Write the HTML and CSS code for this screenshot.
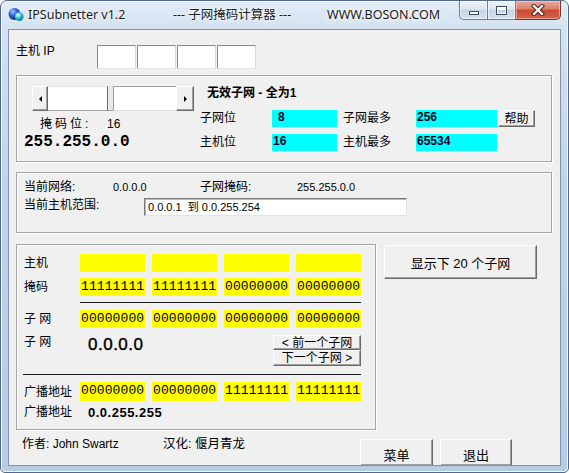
FILE: index.html
```html
<!DOCTYPE html>
<html lang="zh-CN">
<head>
<meta charset="utf-8">
<title>IPSubnetter v1.2</title>
<link rel="stylesheet" href="styles.css">
</head>
<body>
<div class="window">
  <div class="titlebar">
    <svg class="app-icon" viewBox="0 0 16 16">
      <defs>
        <radialGradient id="gBlue" cx="35%" cy="30%" r="75%">
          <stop offset="0" stop-color="#a8ccff"/>
          <stop offset="0.45" stop-color="#2f62cc"/>
          <stop offset="1" stop-color="#12297a"/>
        </radialGradient>
        <radialGradient id="gCyan" cx="35%" cy="30%" r="75%">
          <stop offset="0" stop-color="#e4fdff"/>
          <stop offset="0.5" stop-color="#38c4d6"/>
          <stop offset="1" stop-color="#0f6f80"/>
        </radialGradient>
      </defs>
      <circle cx="6.5" cy="7" r="6" fill="url(#gBlue)"/>
      <circle cx="11.2" cy="9.6" r="4.3" fill="url(#gCyan)"/>
    </svg>
    <span class="title t1">IPSubnetter v1.2</span>
    <span class="title t2">--- 子网掩码计算器 ---</span>
    <span class="title t3">WWW.BOSON.COM</span>
    <div class="controls">
      <div class="cbtn cmin"><i class="g-min"></i></div>
      <div class="cbtn cmax"><i class="g-max"></i></div>
      <div class="cbtn cclose">
        <svg class="g-close" viewBox="0 0 14 12">
          <path d="M3 2 L11 10 M11 2 L3 10" stroke="#4a2520" stroke-width="4.2" stroke-linecap="square"/>
          <path d="M3 2 L11 10 M11 2 L3 10" stroke="#ffffff" stroke-width="2.2" stroke-linecap="square"/>
        </svg>
      </div>
    </div>
  </div>

  <div class="client">
    <div class="ip-row">
      <span class="ip-label">主机 IP</span>
      <div class="ip-boxes">
        <span class="ip-box"></span><span class="ip-box"></span><span class="ip-box"></span><span class="ip-box"></span>
      </div>
    </div>

    <div class="panel panel-mask">
      <div class="mask-left">
        <div class="scroll">
          <span class="sb-btn"><i class="tri-left"></i></span>
          <span class="sb-a"></span>
          <span class="sb-thumb"></span>
          <span class="sb-b"></span>
          <span class="sb-btn sb-right"><i class="tri-right"></i></span>
        </div>
        <div class="bits-row"><span class="bits-label">掩码位:</span><span>16</span></div>
        <div class="big-mask">255.255.0.0</div>
      </div>
      <div class="mask-right">
        <div class="mask-title">无效子网 - 全为1</div>
        <div class="stat-grid">
          <span class="lbl">子网位</span>
          <span class="cyan pad8">8</span>
          <span class="lbl lbl2">子网最多</span>
          <span class="cyan">256</span>
          <button class="btn help">帮助</button>
          <span class="lbl">主机位</span>
          <span class="cyan">16</span>
          <span class="lbl lbl2">主机最多</span>
          <span class="cyan">65534</span>
          <span></span>
        </div>
      </div>
    </div>

    <div class="panel panel-net">
      <div class="net-row">
        <span class="w89">当前网络:</span><span class="w87">0.0.0.0</span><span class="w97">子网掩码:</span><span>255.255.0.0</span>
      </div>
      <div class="net-row range-row">
        <span class="w120">当前主机范围:</span><span class="range-box">0.0.0.1&nbsp; 到 0.0.255.254</span>
      </div>
    </div>

    <div class="lower">
      <div class="panel panel-bin">
        <div class="bin">
          <div class="bin-row">
            <span class="bin-lbl">主机</span><span class="yb"></span><span class="yb"></span><span class="yb"></span><span class="yb"></span>
          </div>
          <div class="bin-row gap6">
            <span class="bin-lbl">掩码</span><span class="yb">11111111</span><span class="yb">11111111</span><span class="yb">00000000</span><span class="yb">00000000</span>
          </div>
          <div class="rule rule-short"></div>
          <div class="bin-row gap7">
            <span class="bin-lbl">子&nbsp;网</span><span class="yb">00000000</span><span class="yb">00000000</span><span class="yb">00000000</span><span class="yb">00000000</span>
          </div>
          <div class="subnet-row">
            <span class="bin-lbl sub-lbl">子&nbsp;网</span>
            <span class="subnet-val">0.0.0.0</span>
            <div class="nav">
              <button class="btn nav-btn">&lt; 前一个子网</button>
              <button class="btn nav-btn nav2">下一个子网 &gt;</button>
            </div>
          </div>
          <div class="rule rule-long"></div>
          <div class="bin-row gap7 tall">
            <span class="bin-lbl">广播地址</span><span class="yb">00000000</span><span class="yb">00000000</span><span class="yb">11111111</span><span class="yb">11111111</span>
          </div>
          <div class="bcast-row">
            <span class="bin-lbl sub-lbl">广播地址</span>
            <span class="bcast-val">0.0.255.255</span>
          </div>
        </div>
      </div>
      <button class="btn show20">显示下 20 个子网</button>
    </div>

    <div class="footer">
      <span class="author">作者: John Swartz</span>
      <span class="translator">汉化: 偃月青龙</span>
      <button class="btn fbtn">菜单</button>
      <button class="btn fbtn exit">退出</button>
    </div>
  </div>
</div>
</body>
</html>
```

FILE: styles.css
```css
* { box-sizing: border-box; }

html, body {
  margin: 0;
  padding: 0;
  background: #ffffff;
}

body {
  width: 569px;
  height: 473px;
  overflow: hidden;
  font-family: "Liberation Sans", "Noto Sans CJK SC", sans-serif;
  font-size: 12px;
  color: #000;
}

/* ---------- window frame ---------- */
.window {
  width: 569px;
  height: 473px;
  border: 1px solid #53698a;
  border-radius: 7px 7px 5px 5px;
  background: linear-gradient(180deg, #e2ecf7 0px, #d3e1f0 28px, #bfd2e8 200px, #b7cce4 100%);
  box-shadow: inset 0 0 0 1px #f2f7fc;
  display: flex;
  flex-direction: column;
  overflow: hidden;
}

.titlebar {
  height: 28px;
  flex: none;
  display: flex;
  align-items: flex-start;
  padding-left: 7px;
}

.app-icon {
  width: 16px;
  height: 16px;
  margin-top: 6px;
  flex: none;
}

.title {
  font-family: "Noto Sans", "Noto Sans CJK SC", sans-serif;
  font-size: 12.5px;
  line-height: 16px;
  margin-top: 6px;
  color: #1b1b1b;
  text-shadow: 0 0 6px #ffffff, 0 0 3px #ffffff;
  white-space: nowrap;
  flex: none;
}
.t1 { width: 145px; margin-left: 4px; }
.t2 { width: 154px; }

.controls {
  margin-left: auto;
  margin-right: 7px;
  display: flex;
  height: 19px;
}

.cbtn {
  height: 19px;
  border: 1px solid #6a7c93;
  border-top: none;
  display: flex;
  align-items: center;
  justify-content: center;
  background: linear-gradient(180deg, #eef3fa 0%, #dbe5f1 45%, #c5d5e8 50%, #d2e0ef 100%);
  box-shadow: inset 0 0 0 1px rgba(255,255,255,0.6);
}
.cmin { width: 28px; border-radius: 0 0 0 5px; border-right: none; }
.cmax { width: 29px; }
.cclose {
  width: 45px;
  border-left: none;
  border-color: #6b3a33;
  border-radius: 0 0 5px 0;
  background: linear-gradient(180deg, #e9a898 0%, #dc7e69 45%, #c84a33 50%, #d4634b 100%);
  box-shadow: inset 0 0 0 1px rgba(255,220,210,0.5);
}

.g-min {
  display: block;
  width: 10px;
  height: 4px;
  margin-top: 6px;
  background: #ffffff;
  border: 1px solid #3e4c5e;
}
.g-max {
  display: block;
  width: 11px;
  height: 9px;
  background: transparent;
  border: 1px solid #3e4c5e;
  box-shadow: inset 0 0 0 1px #ffffff, inset 0 2px 0 1px #ffffff;
}
.g-close { width: 14px; height: 12px; }

/* ---------- client area ---------- */
.client {
  flex: 1;
  margin: 0 7px 6px 7px;
  background: #f0f0f0;
  border: 1px solid #7f93ab;
  display: flex;
  flex-direction: column;
  overflow: hidden;
}

.ip-row {
  display: flex;
  align-items: flex-start;
  margin: 15px 0 0 7px;
}
.ip-label {
  width: 81px;
  line-height: 12px;
  font-size: 12px;
}
.ip-boxes { display: flex; gap: 1px; }
.ip-box {
  width: 39px;
  height: 24px;
  background: #ffffff;
  border: 1px solid;
  border-color: #8a8a8a #d6d6d6 #e6e6e6 #8a8a8a;
}

.panel {
  border: 1px solid #a5a5a5;
  box-shadow: inset 1px 1px 0 #ffffff, 1px 1px 0 #ffffff;
  margin-left: 7px;
  flex: none;
}

/* ---------- mask panel ---------- */
.panel-mask {
  width: 536px;
  height: 87px;
  margin-top: 6px;
  display: flex;
}

.mask-left {
  width: 183px;
  padding: 10px 0 0 7px;
  flex: none;
}

.scroll {
  display: flex;
  width: 162px;
  height: 25px;
  margin-left: 8px;
}
.sb-btn {
  width: 16px;
  height: 25px;
  background: #f0f0f0;
  border: 1px solid;
  border-color: #ffffff #696969 #696969 #ffffff;
  box-shadow: inset -1px -1px 0 #a0a0a0;
  display: flex;
  align-items: center;
  justify-content: center;
  flex: none;
}
.sb-right { width: 18px; }
.tri-left, .tri-right {
  display: block;
  width: 0;
  height: 0;
  border-top: 3px solid transparent;
  border-bottom: 3px solid transparent;
}
.tri-left { border-right: 3px solid #000; }
.tri-right { border-left: 3px solid #000; }

.sb-a {
  width: 60px;
  background: #ffffff;
  border-top: 1px solid #e3e3e3;
  border-right: 1px solid #696969;
  border-bottom: 1px solid #a0a0a0;
  flex: none;
}
.sb-thumb {
  width: 5px;
  background: #e8e8e8;
  border-top: 1px solid #e3e3e3;
  border-bottom: 1px solid #a0a0a0;
  flex: none;
}
.sb-b {
  width: 63px;
  background: #ffffff;
  border-top: 1px solid #a0a0a0;
  border-left: 1px solid #a0a0a0;
  border-bottom: 1px solid #e3e3e3;
  flex: none;
}

.bits-row {
  display: flex;
  margin: 6px 0 0 16px;
  line-height: 14px;
}
.bits-label {
  width: 67px;
  letter-spacing: 3px;
}

.big-mask {
  margin-top: 2px;
  font-family: "Liberation Mono", monospace;
  font-weight: bold;
  font-size: 16px;
  line-height: 18px;
  color: #000;
}

.mask-right {
  flex: 1;
  padding-top: 9px;
}
.mask-title {
  padding-left: 7px;
  font-weight: bold;
  line-height: 16px;
}
.stat-grid {
  margin-top: 9px;
  display: grid;
  grid-template-columns: 72px 65px 79px 81px 38px;
  grid-auto-rows: 17px;
  row-gap: 7px;
  align-items: center;
}
.lbl { line-height: 17px; }
.lbl2 { padding-left: 6px; }
.cyan {
  height: 17px;
  background: #00ffff;
  font-weight: bold;
  font-size: 12px;
  line-height: 14px;
  padding-left: 1px;
  color: #000022;
}
.pad8 { padding-left: 6px; }

.btn {
  margin: 0;
  padding: 0;
  font-family: "Liberation Sans", "Noto Sans CJK SC", sans-serif;
  font-size: 12px;
  color: #000;
  background: #f0f0f0;
  border: 1px solid;
  border-color: #ffffff #696969 #696969 #ffffff;
  box-shadow: inset -1px -1px 0 #a0a0a0;
  border-radius: 0;
  cursor: default;
}
.help {
  width: 37px;
  height: 17px;
  margin-left: 1px;
  line-height: 14px;
}

/* ---------- network panel ---------- */
.panel-net {
  width: 536px;
  height: 61px;
  margin-top: 10px;
  padding: 7px 0 0 7px;
}
.net-row {
  display: flex;
  align-items: flex-start;
  line-height: 14px;
}
.net-row span { flex: none; }
.w89 { width: 89px; }
.w87 { width: 87px; font-size: 11px; }
.w97 { width: 97px; }
.net-row span:last-child { font-size: 11px; }
.range-row { margin-top: 4px; }
.w120 { width: 120px; }
.net-row .range-box {
  width: 263px;
  height: 18px;
  background: #ffffff;
  border: 1px solid;
  border-color: #7a7a7a #e3e3e3 #e3e3e3 #7a7a7a;
  box-shadow: inset 1px 1px 0 #b9b9b9;
  padding-left: 3px;
  line-height: 16px;
  font-size: 12px;
}

/* ---------- lower area ---------- */
.lower {
  display: flex;
  align-items: flex-start;
  margin-top: 11px;
}
.panel-bin {
  width: 360px;
  height: 186px;
  padding: 9px 0 0 7px;
}
.bin { width: 337px; }

.bin-row {
  display: grid;
  grid-template-columns: 49px repeat(4, 65px);
  column-gap: 7px;
  height: 18px;
  align-items: center;
}
.gap6 { margin-top: 6px; }
.gap7 { margin-top: 7px; }
.tall { height: 19px; }

.bin-lbl {
  line-height: 14px;
  white-space: nowrap;
}
.yb {
  height: 100%;
  background: #ffff00;
  font-family: "Liberation Mono", monospace;
  font-size: 13px;
  line-height: 18px;
  padding-left: 1px;
  letter-spacing: 0.1px;
}

.rule {
  height: 1px;
  background: #1c1c1c;
}
.rule-short { margin: 6px 0 0 56px; width: 281px; }
.rule-long { margin: 6px 0 0 -1px; width: 338px; }

.subnet-row {
  display: flex;
  align-items: flex-start;
  height: 37px;
  margin-top: 3px;
}
.sub-lbl {
  width: 56px;
  margin-top: 4px;
  flex: none;
}
.subnet-val {
  margin: 4px 0 0 8px;
  font-size: 17px;
  line-height: 20px;
  letter-spacing: 0.5px;
  -webkit-text-stroke: 0.4px #000;
}
.nav {
  margin: 4px 0 0 auto;
  display: flex;
  flex-direction: column;
  width: 88px;
}
.nav-btn {
  width: 88px;
  height: 15px;
  line-height: 12px;
  font-size: 12px;
}
.nav2 { height: 16px; }

.bcast-row {
  display: flex;
  align-items: flex-start;
  margin-top: 3px;
}
.bcast-row .sub-lbl { margin-top: 1px; }
.bcast-val {
  margin: 1px 0 0 8px;
  font-weight: bold;
  font-size: 13px;
  line-height: 16px;
  letter-spacing: 0.5px;
}

.show20 {
  width: 153px;
  height: 34px;
  margin: 1px 0 0 8px;
  font-size: 13px;
  flex: none;
}

/* ---------- footer ---------- */
.footer {
  display: flex;
  align-items: flex-start;
  margin-top: 7px;
  flex: none;
}
.author {
  width: 141px;
  margin-left: 13px;
  line-height: 14px;
}
.translator {
  width: 197px;
  line-height: 14px;
  font-size: 12.5px;
}
.fbtn {
  width: 73px;
  height: 27px;
  margin-top: 2px;
  font-size: 13px;
  padding-top: 4px;
}
.exit { width: 72px; margin-left: 7px; }
```
